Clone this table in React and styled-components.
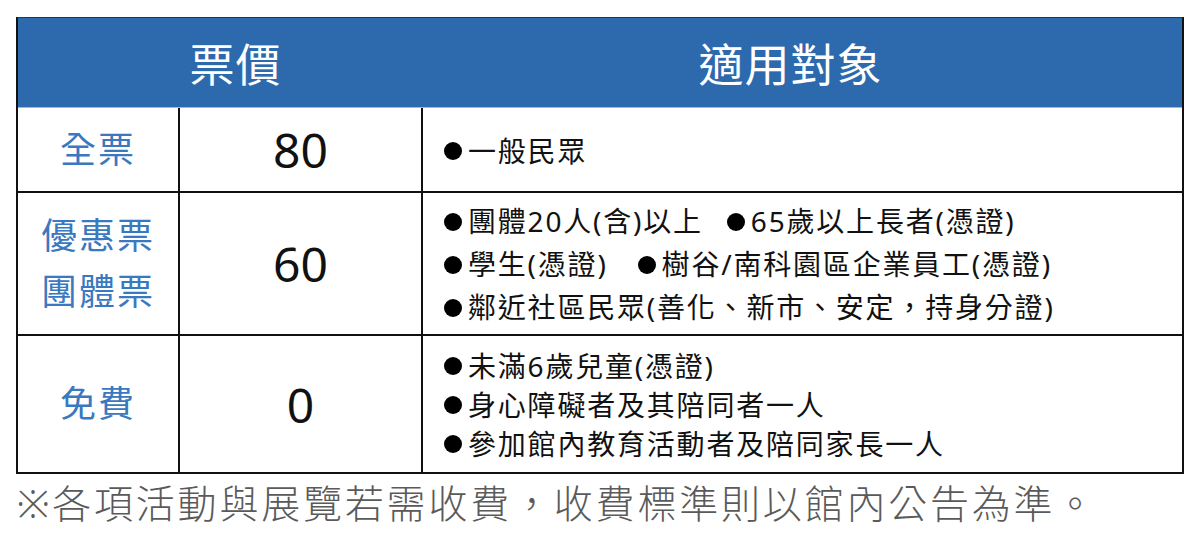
import React from 'react'
import styled, { createGlobalStyle } from 'styled-components'

const GlobalStyle = createGlobalStyle`
  body {
    margin: 0;
    background: #fff;
    font-family: 'Noto Sans', 'Noto Sans CJK TC', sans-serif;
  }
`

const Page = styled.div`
  width: 1200px;
  height: 538px;
  padding: 17px 16px 0 16px;
  box-sizing: border-box;
`

const Table = styled.div`
  display: grid;
  grid-template-columns: 160px 243px 1fr;
  grid-template-rows: 90px 83px 143px 138px;
  border: 2px solid #111;
  border-top-color: #333;
  border-top-width: 1.5px;
`

const HeadCell = styled.div`
  grid-column: ${({ span }) => (span ? `span ${span}` : 'auto')};
  background: #2d69ad;
  color: #fff;
  font-size: 45px;
  letter-spacing: 1px;
  display: flex;
  align-items: center;
  justify-content: center;
  padding: ${({ shift }) => (shift > 0 ? `0 0 0 ${shift}px` : `0 ${-shift}px 0 0`)};
  border-bottom: 1px solid #9ab8e0;
`

const Cell = styled.div`
  display: flex;
  align-items: center;
  justify-content: center;
  border-top: ${({ first }) => (first ? 'none' : '2px solid #111')};
  border-left: ${({ lead }) => (lead ? 'none' : '2px solid #111')};
  box-sizing: border-box;
`

const Label = styled.div`
  color: #3a78c0;
  font-size: 36px;
  letter-spacing: 2px;
  line-height: 56px;
  text-align: center;
`

const Price = styled.div`
  font-size: 48px;
  color: #111;
`

const List = styled(Cell)`
  flex-direction: column;
  align-items: flex-start;
  padding-left: 21px;
  padding-top: 2px;
`

const Line = styled.div`
  display: flex;
  align-items: center;
  font-size: 28px;
  letter-spacing: 1.8px;
  color: #111;
  line-height: ${({ lh }) => lh || 40}px;
  white-space: nowrap;
`

const Item = styled.span`
  display: inline-flex;
  align-items: center;
  margin-right: ${({ gap }) => gap || 0}px;
`

const Dot = styled.span`
  width: 18px;
  height: 18px;
  border-radius: 50%;
  background: #000;
  margin-right: 6px;
  flex-shrink: 0;
`

const Note = styled.div`
  color: #5a5a5a;
  font-size: 39px;
  font-weight: 300;
  letter-spacing: 2.8px;
  line-height: 58px;
  padding-left: 1px;
`

const B = ({ children, gap }) => (
  <Item gap={gap}>
    <Dot />
    {children}
  </Item>
)

export default function App() {
  return (
    <Page>
      <GlobalStyle />
      <Table>
        <HeadCell span={2} shift={32}>票價</HeadCell>
        <HeadCell shift={-22}>適用對象</HeadCell>

        <Cell first lead>
          <Label>全票</Label>
        </Cell>
        <Cell first>
          <Price>80</Price>
        </Cell>
        <List first>
          <Line>
            <B>一般民眾</B>
          </Line>
        </List>

        <Cell lead>
          <Label>
            優惠票
            <br />
            團體票
          </Label>
        </Cell>
        <Cell>
          <Price>60</Price>
        </Cell>
        <List>
          <Line lh={43}>
            <B gap={24}>團體20人(含)以上</B>
            <B>65歲以上長者(憑證)</B>
          </Line>
          <Line lh={43}>
            <B gap={30}>學生(憑證)</B>
            <B>樹谷/南科園區企業員工(憑證)</B>
          </Line>
          <Line lh={43}>
            <B>鄰近社區民眾(善化、新市、安定，持身分證)</B>
          </Line>
        </List>

        <Cell lead>
          <Label>免費</Label>
        </Cell>
        <Cell>
          <Price>0</Price>
        </Cell>
        <List>
          <Line lh={39}>
            <B>未滿6歲兒童(憑證)</B>
          </Line>
          <Line lh={39}>
            <B>身心障礙者及其陪同者一人</B>
          </Line>
          <Line lh={39}>
            <B>參加館內教育活動者及陪同家長一人</B>
          </Line>
        </List>
      </Table>
      <Note>※各項活動與展覽若需收費，收費標準則以館內公告為準。</Note>
    </Page>
  )
}
